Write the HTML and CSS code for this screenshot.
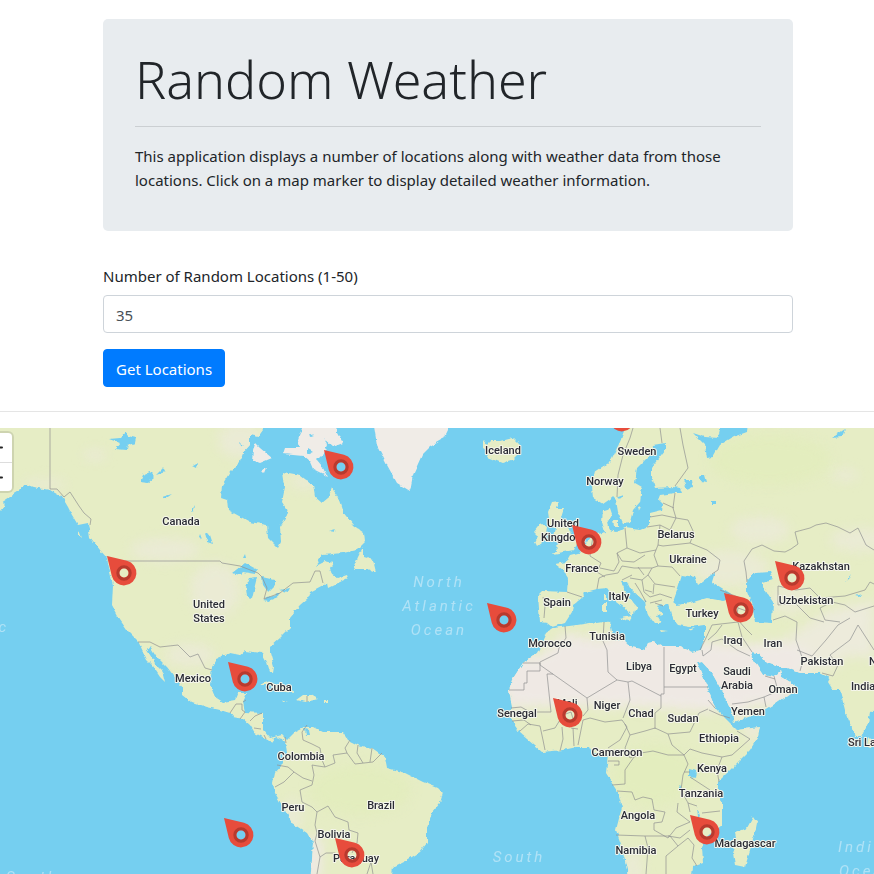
FILE: index.html
```html
<!DOCTYPE html>
<html lang="en">
<head>
<meta charset="utf-8">
<meta name="viewport" content="width=device-width, initial-scale=1">
<title>Random Weather</title>
<link rel="stylesheet" href="styles.css">
</head>
<body>
<main class="container">
  <header class="jumbotron">
    <h1 class="title">Random Weather</h1>
    <hr class="rule">
    <p class="lead">This application displays a number of locations along with weather data from those locations. Click on a map marker to display detailed weather information.</p>
  </header>
  <form class="form">
    <label class="label" for="count">Number of Random Locations (1-50)</label>
    <input class="input" id="count" type="text" inputmode="numeric" value="35">
    <button class="button" type="button">Get Locations</button>
  </form>
</main>
<section class="map" aria-label="Map">
  <svg class="world" viewBox="0 428 874 446" preserveAspectRatio="xMinYMin slice">
    <defs>
      <filter id="coast" filterUnits="userSpaceOnUse" x="-20" y="410" width="920" height="490">
        <feTurbulence type="fractalNoise" baseFrequency="0.16" numOctaves="3" seed="4"/>
        <feDisplacementMap in="SourceGraphic" scale="4" xChannelSelector="R" yChannelSelector="G"/>
      </filter>
      <filter id="soft" filterUnits="userSpaceOnUse" x="-20" y="410" width="920" height="490"><feGaussianBlur stdDeviation="6"/></filter>
      <path id="america" d="M-10 420V505L0 503 12 495 20 490 25 484 33 487 50 490 62 497 68 507 72 515 78 525 88 523 90 537 100 550 107 558 110 572 113 585 112 605 120 620 127 630 138 641 147 660 152 665 160 677 165 682 162 670 155 663 147 650 150 646 157 657 167 667 177 680 183 688 183 695 192 702 207 707 220 710 230 713 233 717 243 719 250 725 255 733 265 738 272 742 276 737 283 739 286 745 287 753 282 765 275 773 273 783 275 793 283 807 292 823 307 833 313 843 312 860 310 884H391L393 867 407 860 420 852 427 843 427 827 432 813 440 803 443 793 438 788 423 782 405 773 387 768 385 757 372 748 358 745 348 740 343 732 323 732 313 727 305 727 295 732 287 740 282 735 270 738 263 730 263 713 245 712 243 702 247 693 238 693 235 700 223 702 215 697 210 685 212 667 217 658 230 653 240 655 245 651 262 653 267 662 270 672 273 673 274 667 270 653 270 647 280 638 290 628 290 617 300 605 308 598 310 592 327 583 328 588 348 578 347 575 338 578 332 575 330 568 333 563 325 561 315 566 323 555 343 553 357 550 365 542 364 533 353 525 343 512 338 497 332 488 328 498 322 503 315 497 313 485 300 475 283 472 285 487 282 502 289 513 280 527 281 542 278 548 268 538 267 525 250 522 228 510 227 500 221 498 222 485 230 472 240 462 243 453 250 445 250 435 258 437 263 430 262 420Z"/>
      <path id="arctic" d="M305 420 297 442 300 448 285 448 283 454 303 456 310 462 313 469 327 476 322 466 317 460 325 452 328 445 323 438 333 447 343 443 337 432 335 420ZM255 443 260 448 272 458 260 463 252 460 253 450ZM262 470l5-2-2 5zM373 420 377 445 387 465 397 483 410 491 413 475 422 455 430 447 442 440 447 430V420Z"/>
      <path id="eurasia" d="M628 420 620 442 610 462 595 472 592 485 593 498 603 504 613 497 616 500 618 512 623 523 630 522 633 510 640 502 642 487 635 483 637 468 650 455 653 445 665 443 665 450 652 467 652 478 655 488 673 487 680 488 682 493 675 493 660 495 658 500 663 505 662 510 650 513 650 522 647 527 640 530 625 528 617 532 609 530 607 523 612 514 610 508 603 510 602 522 605 532 593 535 587 542 582 552 570 555 566 562 555 564 563 570 568 578 567 592 542 591 538 595 540 622 547 623 552 627 565 623 572 612 573 605 583 597 582 593 597 589 607 588 617 602 630 612 632 617 634 610 638 608 625 592 620 582 627 582 630 588 645 602 648 615 654 623 661 623 657 616 663 615 657 607 668 603 672 618 678 625 690 627 705 625 705 638 701 650 693 652 680 647 665 647 653 642 648 643 645 650 630 647 625 642 615 639 612 632 610 622 603 621 577 625 553 628 547 632 540 647 537 653 523 663 512 680 509 690 512 707 511 720 520 733 542 752 563 750 577 747 590 747 593 753 608 755 606 773 617 790 622 807 616 830 622 847 627 870 628 884H691L693 867 703 863 702 847 704 840 722 825 722 803 718 790 718 782 733 767 750 750 758 737 760 727 737 730 732 725 715 708 707 687 697 663 702 662 712 673 723 693 732 713 734 722 760 713 773 705 790 693 795 685 782 677 780 670 773 677 763 675 753 660 752 652 758 653 767 663 782 668 787 668 800 673 820 673 830 678 828 682 833 690 840 690 845 710 855 737 862 737 868 723 870 712 884 706V420Z"/>
      <path id="islands" d="M483 440 487 445 491 441 501 441 513 438 520 445 519 453 512 460 502 463 492 459 487 457 489 452 483 448ZM552 502 559 501 557 508 564 508 561 518 567 525 572 536 578 542 574 550 553 554 558 548 556 546 561 538 554 536 556 528 550 525 548 512ZM541 523 547 528 545 540 537 546 535 542 538 536 534 532ZM363 547 363 557 373 560 376 572 368 569 353 569 358 557ZM753 817 757 823 755 833 745 867 735 865 733 853 737 843 735 833 747 828ZM620 618 632 616 630 622ZM603 603h4v9h-4zM604 594h3v6h-3zM660 630l8 1-7 1zM689 629l6-1-5 3zM260 685 270 681 285 687 296 693 285 692 270 685ZM296 700 303 695 311 695 318 699 306 702ZM282 701h6l-4 1zM324 700h4v2h-4zM613 521h5v5h-4zM868 737l4 4-1 7-4-2zM0 500l5 5-5 6zM79 530l3 8-3-3zM638 507l3-1-2 6z"/>
      <clipPath id="land"><use href="#america"/><use href="#eurasia"/></clipPath>
      <g id="pin">
        <path class="pin-body" fill-rule="evenodd" d="M-17-17 3-12.2A12.5 12.5 0 1 1-12.2 3ZM0-4.7A4.7 4.7 0 1 0 0 4.7 4.7 4.7 0 1 0 0-4.7Z"/>
        <circle class="pin-ring" r="6.2"/>
      </g>
    </defs>
    <g filter="url(#coast)">
      <g class="land"><use href="#america"/><use href="#eurasia"/><use href="#islands"/></g>
      <use class="ice" href="#arctic"/>
      <g clip-path="url(#land)">
        <g class="sand" filter="url(#soft)">
          <path d="M500 655 540 655 565 633 600 640 625 630 690 640 745 645 790 640 815 655 800 680 780 710 750 705 740 722 722 705 713 712 650 708 580 706 505 708Z"/>
          <path d="M790 635 830 610 874 600V660L850 655 830 670 800 675Z" opacity=".7"/>
          <path d="M309 835 322 838 321 880H300Z"/>
          <path d="M743 725 765 722 752 745Z" opacity=".8"/>
        </g>
        <g class="sand faint" filter="url(#soft)">
          <ellipse cx="95" cy="455" rx="12" ry="6"/><ellipse cx="45" cy="484" rx="22" ry="5"/>
          <ellipse cx="165" cy="550" rx="35" ry="12"/><ellipse cx="215" cy="590" rx="25" ry="28"/>
          <ellipse cx="240" cy="440" rx="22" ry="18"/><ellipse cx="305" cy="482" rx="16" ry="7"/>
          <ellipse cx="760" cy="530" rx="30" ry="14"/><ellipse cx="730" cy="568" rx="38" ry="18"/>
          <ellipse cx="860" cy="540" rx="30" ry="12"/><ellipse cx="790" cy="600" rx="20" ry="14"/>
          <ellipse cx="845" cy="475" rx="14" ry="6"/><ellipse cx="292" cy="815" rx="10" ry="16"/>
          <ellipse cx="190" cy="655" rx="25" ry="12"/><ellipse cx="633" cy="870" rx="10" ry="20"/>
        </g>
        <g class="lush" filter="url(#soft)">
          <ellipse cx="655" cy="775" rx="42" ry="30"/><ellipse cx="360" cy="790" rx="50" ry="25"/>
          <ellipse cx="770" cy="460" rx="60" ry="25"/>
        </g>
      </g>
      <path class="water" d="M109 439 120 438 125 432 128 436 136 438 135 443 128 445 127 450 115 449 120 443ZM140 482 143 475 150 472 155 477 148 483ZM156 475 163 468 165 472ZM162 497 172 494 165 499ZM193 466l5-3-1 5zM191 512l4-7-1 6zM205 532 210 535 213 544 207 542ZM200 534l2 5-3-2zM239 442l5 4-4-1zM308 449l5 3-5 2zM310 433l4 3-3 1zM329 531l7-2-1 3zM243 558l2-4 1 4zM232 573 245 563 258 570 255 574 243 572 240 575ZM250 578 257 577 252 598 247 597 246 588ZM262 577 275 580 275 585 268 592 263 585ZM263 600 280 593 278 597 268 601ZM280 590 290 588 288 592ZM305 728l4 1 1 6-4 1z"/>
      <path class="water" d="M673 602 678 588 682 575 695 577 698 585 707 578 715 572 712 582 730 593 734 598 723 601 707 598 690 603 677 605ZM747 582 755 573 770 572 773 580 762 583 767 593 773 602 772 623 755 622 752 605 747 592ZM693 433 705 437 718 438 722 420H748L747 432 733 437 720 445 713 457 707 458 705 445ZM683 480 692 480 693 487 687 490ZM699 475 705 475 707 482 701 481ZM712 502h4v3h-4zM832 438 845 429 842 437ZM845 582 852 573 849 579ZM854 596l8-2-4 3zM689 769 697 771 696 778 689 777ZM697 806l3 10-2 2zM679 782l3 8-2-1zM617 497l6-2-3 5z"/>
    </g>
    <g class="borders">
      <path d="M50 428V489L57 489 64 497 70 492 79 506 84 513 91 519 90 525M112 561H220L222 563 240 566 258 573 262 577 267 588 264 599 280 593 293 583 310 582 315 571 320 571 323 583M138 642 150 642 160 647 178 645 190 657 198 654 205 668 212 670"/>
      <path d="M230 713 236 704H242V710L245 712 240 719M243 702 246 700M250 721 255 716 262 713M254 728 261 729M264 735 266 739M285 737 286 743M307 696V702"/>
      <path d="M307 725 302 732 303 740 312 744 320 748 322 760 325 767 335 763 333 755 347 753 345 748 350 740M347 753 355 764 373 762 380 755 382 753M358 745 357 753 363 763M372 748 370 762M325 767 318 766 312 765 314 775 312 785 300 790 302 802 312 807 317 812 328 806 335 817 348 822 349 830 358 833 357 843 352 853M277 765 288 767 294 772 284 782 275 787M294 772 303 778 312 781M317 812 315 825 317 833 315 841 320 857 317 874M320 857 326 853 335 853 350 864M367 874 371 862 373 874"/>
      <path d="M523 663H540V671H527V683H524V690H509M565 626 566 638 559 648 558 653 540 662V665L587 698 588 710 583 716M553 674H547L551 712H537M587 698 617 680 608 672 607 650 603 641 604 622M617 680 628 682 632 681 661 696M628 682 630 700 623 718M583 720 590 718 605 722 622 720 627 727 620 740 608 748M583 720 578 745M664 647V687H708M664 687V694H661V708L655 713V729M625 724 630 735 645 731 655 728 668 734 690 732 699 713 708 709M511 708 521 707 530 712M512 721 524 720 531 725M520 731 528 724 540 726 543 740 545 750M543 731 555 728 563 715 571 712 574 722M562 727 563 739 560 751M573 728 574 746M571 728 578 729"/>
      <path d="M630 735 625 748 630 758 641 753 653 751 668 755 684 755 690 749 702 753 722 757 732 755 750 739 737 731M668 734 672 745 684 755 688 764 683 775 681 790 688 803 697 806M608 761h11v4h-5M606 773M612 785 625 784 625 770 634 757 641 753M617 791 632 792 635 800 643 797 652 799 654 810 665 812 662 822 654 823 654 830 668 838 676 828 690 822 677 812 678 803M616 835 645 836 670 836 678 846 666 856V874M645 836 648 848 646 874M678 846 688 838 694 845 692 858 697 866M668 836 680 838 690 830M702 813 720 811M690 777 710 790M722 757 717 770 719 782M690 772 684 772M688 803 690 812"/>
      <path d="M702 650 703 656 711 650 712 642 722 639 737 650 750 656M700 650 705 640 712 625 738 622 742 637 752 652M738 620 745 628 752 635M708 640 716 633 722 625M773 620 785 616 797 622 796 640 803 660 800 671M797 650 812 656 826 640 838 625 850 618M822 673 833 676 838 665 830 655 850 640 858 625 874 650M732 704 748 702 764 697 766 707M764 697 778 691 774 676M765 676 775 679M715 708 708 700M709 710 720 715 730 718"/>
      <path d="M746 572 744 561 752 549 762 545 774 551 785 552 791 549 798 544 795 532 810 528 816 525 826 523 838 527 850 533 858 528 866 545 874 550M778 586V605L795 603 810 618 824 622M778 586 796 590 810 588 820 598 845 596 865 590 870 582 874 584M820 608 832 602 845 605 855 612 874 606M820 608 825 620 840 622M747 582 746 572M720 590 738 597 748 604 755 610M733 598 738 608 752 613M738 608 736 620"/>
      <path d="M680 428 683 445 688 468 675 486M660 428 662 443M633 428 630 438 623 455 618 475 617 497M675 493 673 508 676 518 688 520 694 533 690 543 707 550 720 560 718 570 712 574M650 517 662 515 676 518M663 503 674 508M647 527 660 525 670 530 676 518M660 525 658 545 663 546 690 543M658 545 654 555 658 566 672 567 680 576M625 528 627 548 640 553 656 550M593 537 591 548 590 556 601 563 597 572 605 577M617 553 627 548M617 553 622 561 634 562 645 555M617 553 619 562 614 571 600 568M567 592 582 597M543 597 545 606 544 618M597 589 599 578 606 575 618 573 622 566 634 568 652 568 658 566M630 578 642 580 644 592 650 597 660 594 672 598M622 580 632 575M635 583 640 591 646 602M642 580 648 575 655 584 675 587M650 603 662 600M648 575 652 568M655 603 663 606M638 567 644 575M645 590 652 592M654 584 653 594"/>
    </g>
    <g class="ocean-names">
      <text x="439" y="587">North</text><text x="439" y="611">Atlantic</text><text x="439" y="635">Ocean</text>
      <text x="519" y="862">South</text>
      <text class="start" x="838" y="852">Indian</text><text class="start" x="839" y="876">Ocean</text>
      <text class="end" x="9" y="632">Pacific</text><text class="start" x="6" y="882">South</text>
    </g>
    <g class="countries">
      <text x="181" y="525">Canada</text><text x="209" y="608">United</text><text x="209" y="622">States</text>
      <text x="193" y="682">Mexico</text><text x="279" y="691">Cuba</text><text x="503" y="454">Iceland</text>
      <text x="637" y="455">Sweden</text><text x="605" y="485">Norway</text><text x="563" y="527">United</text><text x="563" y="541">Kingdom</text>
      <text x="676" y="538">Belarus</text><text x="688" y="563">Ukraine</text><text x="582" y="572">France</text>
      <text x="619" y="600">Italy</text><text x="557" y="606">Spain</text><text x="702" y="617">Turkey</text>
      <text x="821" y="570">Kazakhstan</text><text x="806" y="604">Uzbekistan</text><text x="607" y="640">Tunisia</text>
      <text x="550" y="647">Morocco</text><text x="639" y="670">Libya</text><text x="683" y="672">Egypt</text>
      <text x="737" y="675">Saudi</text><text x="737" y="689">Arabia</text><text x="733" y="644">Iraq</text><text x="773" y="647">Iran</text>
      <text x="822" y="665">Pakistan</text><text class="start" x="869" y="665">Nepal</text><text class="start" x="851" y="690">India</text>
      <text x="783" y="693">Oman</text><text x="748" y="715">Yemen</text><text x="517" y="717">Senegal</text>
      <text x="567" y="707">Mali</text><text x="607" y="709">Niger</text><text x="641" y="717">Chad</text><text x="683" y="722">Sudan</text>
      <text x="719" y="742">Ethiopia</text><text x="617" y="756">Cameroon</text><text x="712" y="772">Kenya</text>
      <text x="701" y="797">Tanzania</text><text x="638" y="819">Angola</text><text x="636" y="854">Namibia</text>
      <text x="745" y="847">Madagascar</text><text class="start" x="848" y="746">Sri Lanka</text>
      <text x="301" y="760">Colombia</text><text x="293" y="811">Peru</text><text x="381" y="809">Brazil</text>
      <text x="334" y="838">Bolivia</text><text x="356" y="862">Paraguay</text>
    </g>
    <g>
      <use href="#pin" x="341" y="467"/><use href="#pin" x="124" y="573"/><use href="#pin" x="589" y="542"/>
      <use href="#pin" x="504" y="620"/><use href="#pin" x="741" y="610"/><use href="#pin" x="792" y="578"/>
      <use href="#pin" x="245" y="679"/><use href="#pin" x="570" y="715"/><use href="#pin" x="241" y="835"/>
      <use href="#pin" x="352" y="855"/><use href="#pin" x="707" y="832"/><use href="#pin" x="622" y="419"/>
    </g>
  </svg>
  <div class="zoom">
    <button class="zoom-button" type="button" aria-label="Zoom in"><svg class="glyph" viewBox="0 0 11 11"><path d="M1 5.500H10M5.500 1V10"/></svg></button>
    <button class="zoom-button" type="button" aria-label="Zoom out"><svg class="glyph" viewBox="0 0 11 11"><path d="M1 5.500H10"/></svg></button>
  </div>
</section>
</body>
</html>
```
FILE: styles.css
```css
* { box-sizing: border-box; }

body {
  display: flex;
  flex-direction: column;
  height: 100vh;
  margin: 0;
  overflow: hidden;
  background: #fff;
  color: #212529;
  font: 15px/24px "Segoe UI", "Noto Sans", "Open Sans", sans-serif;
}

.container {
  padding: 19px 81px 24px 103px;
  border-bottom: 1px solid #e5e5e5;
}

.jumbotron {
  margin-bottom: 33px;
  padding: 32px;
  border-radius: 5px;
  background: #e8ecef;
}

.title {
  margin: 0 0 19px;
  font-size: 52px;
  font-weight: 300;
  line-height: 56px;
}

.rule {
  margin: 0 0 17px;
  border: 0;
  border-top: 1px solid #cbcfd2;
}

.lead { margin: 0 0 7px; }

.form {
  display: flex;
  flex-direction: column;
  align-items: flex-start;
}

.label { margin-bottom: 7px; }

.input,
.button {
  height: 38px;
  padding: 7px 12px 5px;
  border: 1px solid #ced4da;
  border-radius: 4px;
  font: inherit;
}

.input {
  width: 100%;
  margin-bottom: 16px;
  background: #fff;
  color: #495057;
}

.button {
  border-color: #007bff;
  background: #007bff;
  color: #fff;
}

.map {
  position: relative;
  flex: 1;
  min-height: 0;
  margin-top: 16px;
  overflow: hidden;
  background: #75cff0;
}

.world {
  display: block;
  width: 100%;
  height: 100%;
}

.land { fill: #e6edc5; }
.ice { fill: #f0ece7; }
.sand { fill: #efe9e4; }
.faint { opacity: 0.5; }
.lush { fill: #e1edb9; opacity: 0.6; }
.water { fill: #75cff0; }

.borders {
  fill: none;
  stroke: #8f9090;
  stroke-width: 0.7;
  stroke-linejoin: round;
}

.countries {
  fill: #2b2c35;
  stroke: #f5f6ec;
  stroke-width: 2px;
  stroke-linejoin: round;
  paint-order: stroke;
  font: 500 11px Roboto, sans-serif;
  text-anchor: middle;
}

.ocean-names {
  fill: #b0e2f6;
  font: italic 15px Roboto, sans-serif;
  letter-spacing: 3px;
  text-anchor: middle;
}

.start { text-anchor: start; }
.end { text-anchor: end; }

.pin-body { fill: #e74c3c; }

.pin-ring {
  fill: none;
  stroke: #b83a2e;
  stroke-width: 3px;
}

.zoom {
  position: absolute;
  top: 5px;
  left: -17px;
  width: 29px;
  border-radius: 4px;
  background: #fff;
  box-shadow: 0 0 0 2px rgba(0, 0, 0, 0.1);
}

.zoom-button {
  display: flex;
  align-items: center;
  justify-content: center;
  width: 29px;
  height: 29px;
  padding: 0;
  border: 0;
  background: none;
}

.zoom-button + .zoom-button { border-top: 1px solid #ddd; }

.glyph {
  width: 11px;
  height: 11px;
  fill: none;
  stroke: #222;
  stroke-width: 2px;
  stroke-linecap: round;
}
```
